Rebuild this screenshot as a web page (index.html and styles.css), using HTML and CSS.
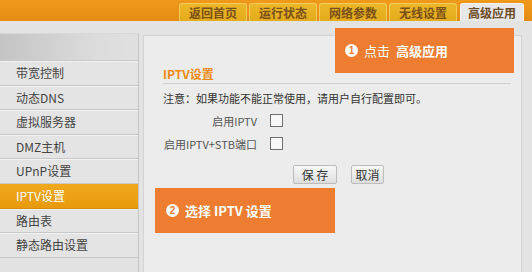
FILE: index.html
```html
<!DOCTYPE html>
<html lang="zh-CN">
<head>
    <meta charset="UTF-8">
    <meta name="viewport" content="width=device-width, initial-scale=1.0">
    <title>高级应用 - IPTV设置</title>
    <link rel="stylesheet" href="styles.css">
</head>
<body>
    <!-- Top navigation -->
    <header class="topbar">
        <a class="tab" href="#">返回首页</a>
        <a class="tab" href="#">运行状态</a>
        <a class="tab" href="#">网络参数</a>
        <a class="tab" href="#">无线设置</a>
        <a class="tab active" href="#">高级应用</a>
    </header>

    <div class="main">
        <!-- Side menu -->
        <nav class="side">
            <div class="side-head"></div>
            <a class="side-item" href="#">带宽控制</a>
            <a class="side-item" href="#">动态DNS</a>
            <a class="side-item" href="#">虚拟服务器</a>
            <a class="side-item" href="#">DMZ主机</a>
            <a class="side-item" href="#">UPnP设置</a>
            <a class="side-item current" href="#">IPTV设置</a>
            <a class="side-item" href="#">路由表</a>
            <a class="side-item" href="#">静态路由设置</a>
        </nav>

        <!-- Content panel -->
        <section class="panel">
            <h2 class="panel-title">IPTV设置</h2>
            <p class="note">注意：如果功能不能正常使用，请用户自行配置即可。</p>
            <div class="form-row first">
                <label class="form-label" for="iptv">启用IPTV</label>
                <input class="check" type="checkbox" id="iptv">
            </div>
            <div class="form-row">
                <label class="form-label" for="stb">启用IPTV+STB端口</label>
                <input class="check" type="checkbox" id="stb">
            </div>
            <div class="actions">
                <button class="btn btn-save">保 存</button>
                <button class="btn btn-cancel">取消</button>
            </div>
        </section>
    </div>

    <!-- Step callouts -->
    <div class="callout callout-one">
        <span class="step">1</span>
        <span>点击</span>
        <strong>高级应用</strong>
    </div>
    <div class="callout callout-two">
        <span class="step">2</span>
        <span>选择 IPTV 设置</span>
    </div>
</body>
</html>
```

FILE: styles.css
```css
/* Global Styles */
body {
    margin: 0;
    width: 532px;
    height: 272px;
    overflow: hidden;
    position: relative;
    background-color: #e3e3e3;
    font-family: "Noto Sans CJK SC", "Liberation Sans", sans-serif;
    font-size: 12px;
    color: #333333;
}

a {
    text-decoration: none;
}

/* Top Bar */
.topbar {
    height: 21px;
    box-sizing: border-box;
    background: linear-gradient(to bottom, #f09a1c, #e58a12);
    display: flex;
    justify-content: flex-end;
    align-items: flex-end;
    gap: 2px;
    padding-right: 8px;
}

.tab {
    width: 68px;
    height: 18px;
    box-sizing: border-box;
    background: linear-gradient(to bottom, #ebb82a, #e3aa1a);
    border: 1px solid #f3cc5a;
    border-bottom: none;
    border-radius: 3px 3px 0 0;
    color: #7b5014;
    font-size: 12px;
    font-weight: bold;
    line-height: 17px;
    text-align: center;
}

.tab.active {
    width: 64px;
    margin-left: 1px;
    background: #e8e8e8;
    border-color: #f4f4f4;
    color: #6b4a24;
}

/* Main Layout */
.main {
    display: flex;
    align-items: flex-start;
    padding-top: 12px;
    gap: 4px;
}

/* Side Menu */
.side {
    width: 139px;
    display: flex;
    flex-direction: column;
    border-top: 1px solid #d8d8d8;
    border-right: 1px solid #c4c4c4;
    box-sizing: border-box;
    background: #e2e2e2;
    height: 240px;
}

.side-head {
    height: 26px;
    background: linear-gradient(to right, #c4c4c4, #dcdcdc 70%, #e0e0e0);
    border-bottom: 1px solid #c6c6c6;
}

.side-item {
    height: 23.6px;
    line-height: 23.6px;
    padding-left: 16px;
    color: #444444;
    font-size: 12px;
    background: #e4e4e4;
    border-bottom: 1px solid #c8c8c8;
    box-shadow: inset 0 1px 0 #f2f2f2;
}

.side-item.current {
    background: linear-gradient(to bottom, #f0a81c, #e89a0c);
    color: #ffffff;
    box-shadow: none;
    border-bottom-color: #d88c0a;
}

/* Content Panel */
.panel {
    flex: 1;
    margin-top: 2px;
    margin-right: 10px;
    height: 250px;
    box-sizing: border-box;
    background: #ececec;
    border: 1px solid #d2d2d2;
    padding: 30px 10px 0 19px;
}

.panel-title {
    margin: 0;
    font-size: 12px;
    font-weight: bold;
    color: #f08a10;
    line-height: 16px;
    padding-bottom: 1px;
    border-bottom: 1px solid #d0d0d0;
}

.note {
    margin: 6px 0 0;
    line-height: 16px;
    font-size: 11px;
    color: #333333;
}

.form-row {
    display: flex;
    align-items: center;
    height: 23px;
}

.form-row.first {
    margin-top: 3px;
}

.form-label {
    width: 94px;
    text-align: right;
    font-size: 11px;
    color: #555555;
}

.check {
    appearance: none;
    width: 13px;
    height: 13px;
    margin: 0 0 0 13px;
    border: 1px solid #707070;
    background: #f8f8f8;
    box-sizing: border-box;
}

.actions {
    display: flex;
    gap: 14px;
    padding-left: 130px;
    margin-top: 10px;
}

.btn {
    height: 19px;
    padding: 0;
    font-family: inherit;
    font-size: 12px;
    color: #333333;
    background: linear-gradient(to bottom, #f8f8f8, #dedede);
    border: 1px solid #bcbcbc;
    border-radius: 2px;
    line-height: 17px;
}

.btn-save {
    width: 44px;
}

.btn-cancel {
    width: 33px;
}

/* Callouts */
.callout {
    position: absolute;
    background: #ee7d31;
    color: #ffffff;
    font-size: 13px;
    display: flex;
    align-items: center;
    gap: 6px;
    box-sizing: border-box;
}

.callout-one {
    left: 335px;
    top: 28px;
    width: 179px;
    height: 45px;
    padding-left: 10px;
}

.callout-two {
    left: 155px;
    top: 188px;
    width: 180px;
    height: 45px;
    padding-left: 11px;
    font-weight: bold;
}

.callout strong {
    font-weight: bold;
}

.step {
    width: 13px;
    height: 13px;
    border-radius: 50%;
    background: #ffffff;
    color: #ee7d31;
    font-size: 10px;
    font-weight: bold;
    line-height: 13px;
    text-align: center;
    font-family: "Liberation Sans", sans-serif;
}
```
